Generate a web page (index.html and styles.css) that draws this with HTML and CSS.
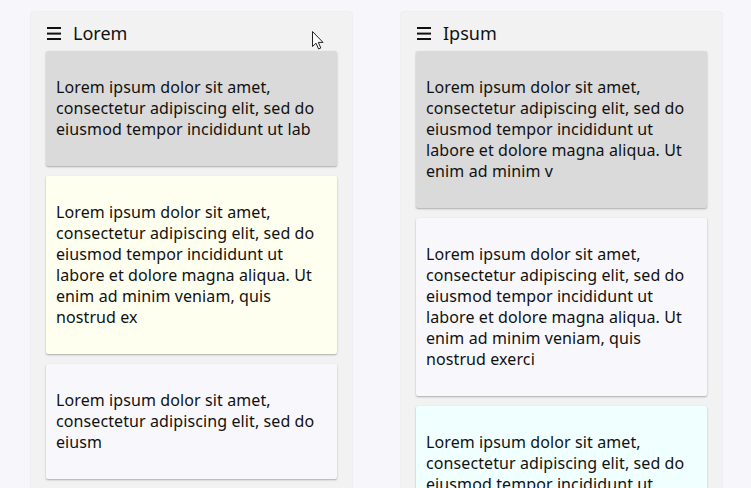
FILE: index.html
```html
<!DOCTYPE html>
<html>
<head>
<meta charset="utf-8">
<link rel="stylesheet" href="styles.css">
</head>
<body>
<div class="board">
  <section class="list">
    <header class="list-head">
      <svg class="menu" width="14" height="13" viewBox="0 0 14 13"><rect x="0" y="0" width="14" height="2"/><rect x="0" y="5.6" width="14" height="2"/><rect x="0" y="11" width="14" height="2"/></svg>
      <span class="title">Lorem</span>
    </header>
    <div class="cards">
      <article class="card gray"><p>Lorem ipsum dolor sit amet, consectetur adipiscing elit, sed do eiusmod tempor incididunt ut lab</p></article>
      <article class="card ivory"><p>Lorem ipsum dolor sit amet, consectetur adipiscing elit, sed do eiusmod tempor incididunt ut labore et dolore magna aliqua. Ut enim ad minim veniam, quis nostrud ex</p></article>
      <article class="card ghost"><p>Lorem ipsum dolor sit amet, consectetur adipiscing elit, sed do eiusm</p></article>
    </div>
  </section>
  <section class="list">
    <header class="list-head">
      <svg class="menu" width="14" height="13" viewBox="0 0 14 13"><rect x="0" y="0" width="14" height="2"/><rect x="0" y="5.6" width="14" height="2"/><rect x="0" y="11" width="14" height="2"/></svg>
      <span class="title">Ipsum</span>
    </header>
    <div class="cards">
      <article class="card gray"><p>Lorem ipsum dolor sit amet, consectetur adipiscing elit, sed do eiusmod tempor incididunt ut labore et dolore magna aliqua. Ut enim ad minim v</p></article>
      <article class="card ghost"><p>Lorem ipsum dolor sit amet, consectetur adipiscing elit, sed do eiusmod tempor incididunt ut labore et dolore magna aliqua. Ut enim ad minim veniam, quis nostrud exerci</p></article>
      <article class="card azure"><p>Lorem ipsum dolor sit amet, consectetur adipiscing elit, sed do eiusmod tempor incididunt ut labore et dolore magna aliqua.</p></article>
    </div>
  </section>
</div>
<svg class="cursor" width="13" height="19" viewBox="0 0 13 19"><path d="M0.5 0.5 L0.5 15.5 L4 12.2 L6.6 18 L8.8 17 L6.3 11.4 L11 11.4 Z" fill="#fff" stroke="#222" stroke-width="1" stroke-linejoin="round"/></svg>
</body>
</html>
```
FILE: styles.css
```css
html, body {
  margin: 0;
  height: 488px;
  overflow: hidden;
}
body {
  background: #f7f7fb;
  font-family: "Noto Sans", "Open Sans", sans-serif;
  color: #111;
  position: relative;
}
.board {
  display: flex;
  align-items: flex-start;
  gap: 49px;
  padding: 12px 0 0 31px;
}
.list {
  width: 321px;
  box-sizing: border-box;
  background: #f2f2f2;
  border-radius: 3px;
  box-shadow: 0 0 2px rgba(0, 0, 0, 0.12);
  padding: 0 15px 15px;
}
.list-head {
  height: 39px;
  box-sizing: border-box;
  padding: 3px 0 0 1px;
  display: flex;
  align-items: center;
  gap: 12px;
}
.menu {
  fill: #111;
  flex: none;
}
.title {
  font-size: 18px;
  line-height: 24px;
}
.cards {
  display: flex;
  flex-direction: column;
  gap: 10px;
}
.card {
  border-radius: 2px;
  box-shadow: 0 1px 2px rgba(0, 0, 0, 0.3);
  padding: 26px 10px;
}
.card p {
  margin: 0;
  font-size: 16px;
  line-height: 21px;
  letter-spacing: 0.1px;
}
.gray { background: #dadada; }
.ivory { background: #fffff0; }
.ghost { background: #f8f8fc; }
.azure { background: #f0ffff; }
.cursor {
  position: absolute;
  left: 312px;
  top: 31px;
}
```
